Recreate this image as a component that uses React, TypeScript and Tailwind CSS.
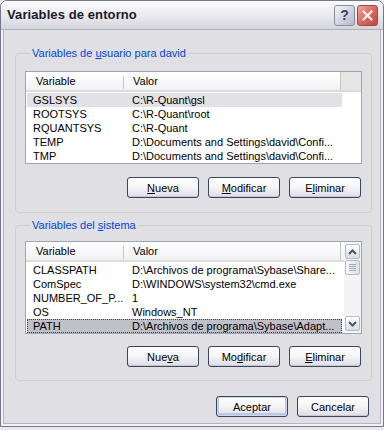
import React from 'react';

type Row = [string, string];

const userVars: Row[] = [
  ['GSLSYS', 'C:\\R-Quant\\gsl'],
  ['ROOTSYS', 'C:\\R-Quant\\root'],
  ['RQUANTSYS', 'C:\\R-Quant'],
  ['TEMP', 'D:\\Documents and Settings\\david\\Confi...'],
  ['TMP', 'D:\\Documents and Settings\\david\\Confi...'],
];

const systemVars: Row[] = [
  ['CLASSPATH', 'D:\\Archivos de programa\\Sybase\\Share...'],
  ['ComSpec', 'D:\\WINDOWS\\system32\\cmd.exe'],
  ['NUMBER_OF_P...', '1'],
  ['OS', 'Windows_NT'],
  ['PATH', 'D:\\Archivos de programa\\Sybase\\Adapt...'],
];

function XpButton({ children, isDefault }: { children: React.ReactNode; isDefault?: boolean }) {
  return (
    <button
      className={
        'w-[72px] h-[21px] rounded-[3px] border border-[#3c4658] bg-gradient-to-b from-white via-[#f5f5f7] to-[#dcdce4] text-[11px] text-black leading-none pt-px ' +
        (isDefault ? 'shadow-[inset_0_0_0_1px_#c9d6ee,inset_0_-1px_0_2px_#b9c9e8]' : 'shadow-[inset_0_-1px_0_#c8c8d2]')
      }
    >
      {children}
    </button>
  );
}

function ScrollArrow({ up }: { up?: boolean }) {
  return (
    <div className="h-[15px] rounded-[2px] border border-[#b6bccb] bg-gradient-to-b from-white to-[#d9dce6] flex items-center justify-center">
      <svg width="9" height="6" viewBox="0 0 9 6">
        <path
          d={up ? 'M1 5 L4.5 1.5 L8 5' : 'M1 1 L4.5 4.5 L8 1'}
          fill="none"
          stroke="#4b5566"
          strokeWidth="2"
        />
      </svg>
    </div>
  );
}

function Scrollbar() {
  return (
    <div className="w-[17px] bg-[#f4f4f6] flex flex-col px-px py-[2px]">
      <ScrollArrow up />
      <div className="mt-px h-[15px] rounded-[2px] border border-[#b6bccb] bg-gradient-to-r from-[#f8f8fa] to-[#dfe1e8] flex flex-col items-center justify-center gap-px">
        <div className="w-[7px] h-px bg-[#a2a8b6]" />
        <div className="w-[7px] h-px bg-[#a2a8b6]" />
        <div className="w-[7px] h-px bg-[#a2a8b6]" />
        <div className="w-[7px] h-px bg-[#a2a8b6]" />
      </div>
      <div className="flex-1" />
      <ScrollArrow />
    </div>
  );
}

function ListView({
  rows,
  selected,
  focused,
  scroll,
}: {
  rows: Row[];
  selected: number;
  focused?: boolean;
  scroll?: boolean;
}) {
  return (
    <div className="h-[93px] border border-[#9ea6b4] bg-white flex">
      <div className="flex-1 flex flex-col min-w-0">
        <div className="h-[21px] flex bg-gradient-to-b from-white to-[#f2f2f6] border-b-[2px] border-[#dcdcd8]">
          <div className="w-[98px] pl-[10px] flex items-center relative">
            Variable
            <div className="absolute right-0 top-[4px] h-[13px] w-px bg-[#c6c6c6]" />
          </div>
          <div className="w-[217px] pl-[9px] flex items-center border-r border-[#c6c6c6]">Valor</div>
          {!scroll && <div className="flex-1 bg-[#e4e7e3]" />}
        </div>
        <div className="pt-px">
          {rows.map(([name, value], i) => {
            const sel = i === selected;
            return (
              <div
                key={name}
                className={
                  'h-[14px] leading-[14px] flex w-[315px] ml-px ' +
                  (sel
                    ? focused
                      ? 'bg-[#c0c0c8] outline-1 outline-dotted outline-[#404048] -outline-offset-1'
                      : 'bg-[#e2e1e6]'
                    : '')
                }
              >
                <div className="w-[97px] pl-[6px] whitespace-nowrap">{name}</div>
                <div className="flex-1 pl-[8px] whitespace-nowrap">{value}</div>
              </div>
            );
          })}
        </div>
      </div>
      {scroll && <Scrollbar />}
    </div>
  );
}

function Group({
  legend,
  children,
  className,
}: {
  legend: React.ReactNode;
  children: React.ReactNode;
  className?: string;
}) {
  return (
    <fieldset className={'mx-[11px] w-[357px] border border-[#d0d0bf] rounded-[4px] px-[9px] ' + (className ?? '')}>
      <legend className="ml-[5px] px-[2px] text-[#0046d5] leading-[13px]">{legend}</legend>
      {children}
    </fieldset>
  );
}

export default function App() {
  return (
    <div className="w-[384px] h-[430px] bg-[#e8e8ee] font-['Liberation_Sans',Arial,sans-serif] text-[11px] text-black">
      <div className="h-[427px] border border-[#77778a] rounded-t-[7px] flex flex-col overflow-hidden">
        <div className="h-[29px] flex items-center pl-[6px] pr-[5px] bg-gradient-to-b from-[#fbfbfd] via-[#ebebf0] to-[#d4d4dc] border-b border-[#b0b0bc]">
          <span className="font-bold text-[13px] text-[#1c1c28] tracking-[0.1px]">Variables de entorno</span>
          <div className="ml-auto flex gap-[2px]">
            <div className="w-[21px] h-[21px] rounded-[3px] border border-[#8c8ca0] bg-gradient-to-br from-[#f4f4fa] to-[#b6b8c8] flex items-center justify-center">
              <span className="font-bold text-[14px] text-[#3c4070] leading-none">?</span>
            </div>
            <div className="w-[21px] h-[21px] rounded-[3px] border border-[#a04848] bg-gradient-to-br from-[#eeaaa0] via-[#d86a60] to-[#c04840] flex items-center justify-center">
              <svg width="11" height="11" viewBox="0 0 11 11">
                <path d="M1.5 1.5 L9.5 9.5 M9.5 1.5 L1.5 9.5" stroke="#fff4f0" strokeWidth="2.2" strokeLinecap="round" />
              </svg>
            </div>
          </div>
        </div>
        <div className="flex-1 border-x-2 border-b-2 border-[#f2f2f6]">
          <div className="h-full bg-[#e0dfe3] border-x border-b border-[#b4b4c0] flex flex-col">
            <Group legend={<>Variables de <u>u</u>suario para david</>} className="mt-[17px] pb-[14px]">
              <div className="mt-[11px]">
                <ListView rows={userVars} selected={0} />
              </div>
              <div className="mt-[13px] flex justify-end gap-[9px] pr-px">
                <XpButton><u>N</u>ueva</XpButton>
                <XpButton><u>M</u>odificar</XpButton>
                <XpButton>E<u>l</u>iminar</XpButton>
              </div>
            </Group>
            <Group legend={<>Variables del <u>s</u>istema</>} className="mt-[6px] pb-[13px]">
              <div className="mt-[9px]">
                <ListView rows={systemVars} selected={4} focused scroll />
              </div>
              <div className="mt-[12px] flex justify-end gap-[9px] pr-px">
                <XpButton>Nue<u>v</u>a</XpButton>
                <XpButton>Mo<u>d</u>ificar</XpButton>
                <XpButton><u>E</u>liminar</XpButton>
              </div>
            </Group>
            <div className="mt-[15px] flex justify-end gap-[9px] pr-[11px]">
              <XpButton isDefault>Aceptar</XpButton>
              <XpButton>Cancelar</XpButton>
            </div>
          </div>
        </div>
      </div>
    </div>
  );
}
